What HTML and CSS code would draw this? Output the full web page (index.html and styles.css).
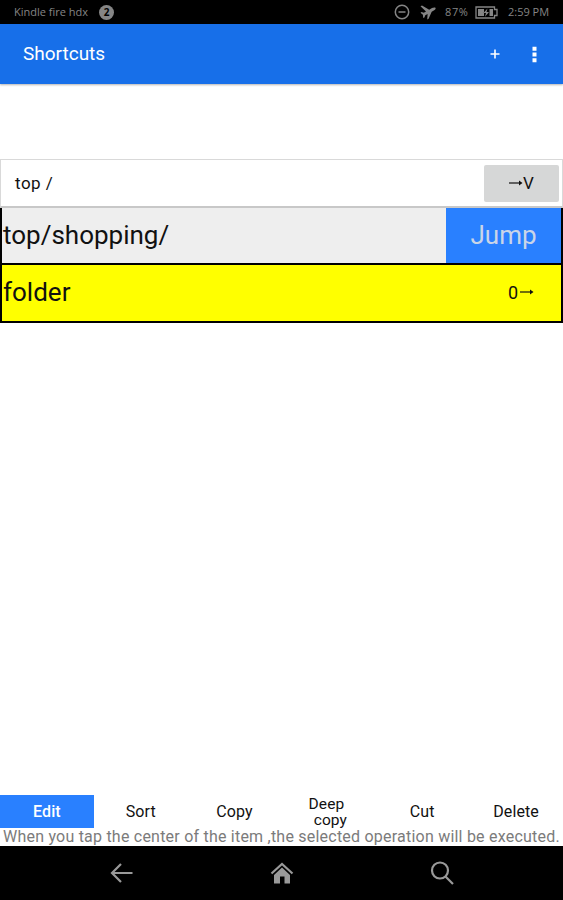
FILE: index.html
```
<!DOCTYPE html>
<html lang="en">
<head>
  <meta charset="UTF-8">
  <meta name="viewport" content="width=device-width, initial-scale=1.0">
  <title>Shortcuts</title>
  <link rel="stylesheet" href="styles.css">
</head>
<body>
  <!-- Status bar -->
  <div class="status-bar">
    <span class="device">Kindle fire hdx</span>
    <span class="badge">2</span>
    <svg class="dnd" width="16" height="16" viewBox="0 0 16 16">
      <circle cx="8" cy="8" r="6.7"/>
      <path d="M4.500 8h7"/>
    </svg>
    <svg class="plane" width="16" height="16" viewBox="0 0 16 16">
      <path d="M15.500 3.800c-1.200-.6-2.500-.2-3.500.3L9.200 5.700 2 1.500.5 2.300 6 7.400 3.800 8.700 1.600 8 .5 8.700l2.400 2.100L3.200 14l1.200-.5.900-2.300L7.600 10l-.4 5.500 1.400-.8L11.700 7.700l2.500-1.400c.9-.5 1.800-1.500 1.300-2.500z"/>
    </svg>
    <span class="percent">87%</span>
    <svg class="battery" width="23" height="13" viewBox="0 0 23 13">
      <path class="case" d="M1 1h18.500v2.500H22v6h-2.500V12H1z"/>
      <path class="fill" d="M3 3h6v7H3zM14.500 3h3.500v7h-3.500zM12.500 2.500 8.500 7h2.500l-1 3.800L14 6h-2.500z"/>
    </svg>
    <span class="clock">2:59 PM</span>
  </div>

  <header class="app-bar">
    <h1>Shortcuts</h1>
    <svg class="add" width="10" height="10" viewBox="0 0 10 10">
      <path d="M5 .5v9M.5 5h9"/>
    </svg>
    <svg class="more" width="5" height="17" viewBox="0 0 5 17">
      <path d="M.5.800h4v4h-4zM.5 6.500h4v4h-4zM.5 12.200h4v4h-4z"/>
    </svg>
  </header>

  <main>
    <div class="path-bar">
      <span class="path">top /</span>
      <button class="sort-button"><svg width="14" height="8" viewBox="0 0 14 8"><path d="M0 4h11"/><path class="head" d="M10 1.500 13.500 4 10 6.500z"/></svg>V</button>
    </div>

    <div class="list">
      <div class="row shopping">
        <span class="name">top/shopping/</span>
        <button class="jump">Jump</button>
      </div>
      <div class="row folder">
        <span class="name">folder</span>
        <span class="count">0<svg width="14" height="8" viewBox="0 0 14 8"><path d="M0 4h11"/><path class="head" d="M10 1.500 13.500 4 10 6.500z"/></svg></span>
      </div>
    </div>
  </main>

  <!-- Operations -->
  <div class="tabs">
    <button class="tab active">Edit</button>
    <button class="tab">Sort</button>
    <button class="tab">Copy</button>
    <button class="tab deep">Deep<br>&nbsp; copy</button>
    <button class="tab">Cut</button>
    <button class="tab">Delete</button>
  </div>
  <p class="hint">When you tap the center of the item ,the selected operation will be executed.</p>

  <!-- System navigation -->
  <nav class="nav-bar">
    <svg width="24" height="24" viewBox="0 0 24 24">
      <path d="M22.500 12H2.500M11 3 2 12l9 9"/>
    </svg>
    <svg class="home" width="24" height="24" viewBox="0 0 24 24">
      <path class="solid" d="M12 6.500 20 14v8.500h-5.500v-7h-4.500v7H4V14z"/>
      <path d="M1.500 12.500 12 3l10.500 9.500"/>
    </svg>
    <svg width="24" height="24" viewBox="0 0 24 24">
      <circle cx="10" cy="9.500" r="8"/>
      <path d="M15.500 15.500 23 23"/>
    </svg>
  </nav>
</body>
</html>
```

FILE: styles.css
```
* {
  box-sizing: border-box;
}

body {
  margin: 0;
  height: 900px;
  display: flex;
  flex-direction: column;
  overflow: hidden;
  background-color: #ffffff;
  color: #111111;
  font-family: Roboto, sans-serif;
}

button {
  margin: 0;
  padding: 0;
  border: none;
  background: none;
  color: inherit;
  font-family: inherit;
}

svg {
  flex: none;
}

/* Status bar */
.status-bar {
  display: flex;
  align-items: center;
  flex: none;
  height: 24px;
  padding: 0 12px 0 14px;
  background-color: #000000;
  color: #858585;
  font-family: "Open Sans", sans-serif;
  font-size: 11px;
  line-height: 22px;
  white-space: nowrap;
}

.device {
  width: 76px;
  padding-bottom: 1px;
}

.badge {
  width: 15px;
  height: 15px;
  margin-left: 9px;
  border-radius: 50%;
  background-color: #858585;
  color: #000000;
  font-size: 10px;
  font-weight: bold;
  line-height: 15px;
  text-align: center;
}

.dnd {
  margin-left: auto;
  fill: none;
  stroke: #858585;
  stroke-width: 1.5;
}

.plane {
  margin-left: 10px;
  fill: #858585;
}

.percent {
  width: 25px;
  margin-left: 9px;
  padding-bottom: 1px;
  letter-spacing: 0.6px;
}

.battery {
  margin-left: 5px;
}

.battery .case {
  fill: none;
  stroke: #858585;
  stroke-width: 1.3;
}

.battery .fill {
  fill: #858585;
}

.clock {
  width: 43px;
  margin-left: 10px;
  padding-bottom: 1px;
}

/* App bar */
.app-bar {
  display: flex;
  align-items: center;
  flex: none;
  height: 60px;
  padding: 0 26px 0 23px;
  background-color: #176fe9;
  color: #ffffff;
  box-shadow: 0 1px 2px rgba(0, 0, 0, 0.3);
}

h1 {
  flex: 1;
  margin: 0;
  padding-bottom: 2px;
  font-size: 19px;
  font-weight: 400;
}

.add {
  fill: none;
  stroke: #ffffff;
  stroke-width: 1.6;
}

.more {
  margin-left: 32px;
  fill: #ffffff;
}

main {
  flex: 1;
  padding-top: 75px;
}

/* Current path */
.path-bar {
  display: flex;
  align-items: center;
  justify-content: space-between;
  height: 49px;
  padding: 0 3px 0 14px;
  border: 1px solid #d9d9d9;
  border-bottom: 2px solid #c8c8c8;
  font-size: 17px;
}

.path {
  letter-spacing: 0.5px;
}

.sort-button {
  display: flex;
  align-items: center;
  justify-content: center;
  width: 75px;
  height: 37px;
  border-radius: 2px;
  background-color: #d6d7d7;
  font-size: 17px;
}

.sort-button svg,
.count svg {
  stroke: #111111;
  stroke-width: 1.2;
}

.head {
  fill: #111111;
  stroke: none;
}

/* Shortcut rows */
.list {
  border: 2px solid #000000;
  border-top: none;
}

.row {
  display: flex;
  align-items: center;
  justify-content: space-between;
  height: 55px;
}

.name {
  padding-left: 1px;
  font-size: 26px;
}

.shopping {
  background-color: #eeeeee;
}

.shopping .name {
  padding-bottom: 2px;
}

.jump {
  width: 115px;
  height: 55px;
  padding-bottom: 2px;
  background-color: #2980ff;
  color: #c9d5e8;
  font-size: 26px;
}

.folder {
  height: 58px;
  padding-bottom: 2px;
  border-top: 2px solid #000000;
  background-color: #ffff00;
}

.count {
  display: flex;
  align-items: center;
  gap: 2px;
  padding-right: 27px;
  font-size: 18px;
}

/* Operation tabs */
.tabs {
  display: grid;
  grid-template-columns: repeat(6, 1fr);
  flex: none;
  height: 33px;
}

.tab {
  font-size: 16px;
  letter-spacing: 0.1px;
}

.active {
  background-color: #2980ff;
  color: #ffffff;
  font-weight: 500;
}

.deep {
  padding-right: 4px;
  font-size: 15.5px;
  line-height: 16px;
}

.hint {
  flex: none;
  height: 18px;
  margin: 0;
  padding-left: 3px;
  color: #7b7b7b;
  font-size: 16px;
  letter-spacing: 0.22px;
  line-height: 18px;
  white-space: nowrap;
}

/* System navigation */
.nav-bar {
  display: flex;
  align-items: center;
  justify-content: space-between;
  flex: none;
  height: 54px;
  padding: 0 109px 0 110px;
  background-color: #000000;
}

.nav-bar svg {
  fill: none;
  stroke: #999999;
  stroke-width: 2.2;
}

.nav-bar .solid {
  fill: #999999;
  stroke: none;
}
```
